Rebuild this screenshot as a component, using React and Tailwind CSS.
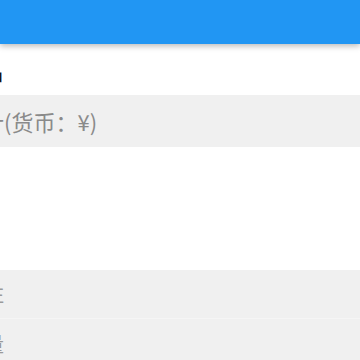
export default function App() {
  const font = { fontFamily: '"Noto Sans CJK SC", "Noto Sans", sans-serif' };
  return (
    <div className="w-[360px] h-[360px] overflow-hidden bg-white" style={font}>
      <div className="relative z-10 h-[44px] bg-[#2196f3] shadow-[0_2px_6px_rgba(0,0,0,0.28)]" />
      <div className="h-[51px] bg-white flex items-center">
        <span className="-ml-[41px] text-[22px] leading-none text-[#111] whitespace-nowrap">商品</span>
      </div>
      <div className="h-[52px] bg-[#f0f0f0] flex items-center">
        <span className="-ml-[40px] text-[22px] leading-none text-[#8a8a8a] whitespace-nowrap">合计(货币：¥)</span>
      </div>
      <div className="h-[123px] bg-white" />
      <div className="h-[49px] bg-[#f0f0f0] flex items-center border-b border-[#f5f5f5]">
        <span className="-ml-[36px] text-[20px] leading-none text-[#9a9a9a] whitespace-nowrap">备注</span>
      </div>
      <div className="h-[50px] bg-[#f0f0f0] flex items-center">
        <span className="-ml-[36px] text-[20px] leading-none text-[#9a9a9a] whitespace-nowrap">数量</span>
      </div>
    </div>
  );
}
